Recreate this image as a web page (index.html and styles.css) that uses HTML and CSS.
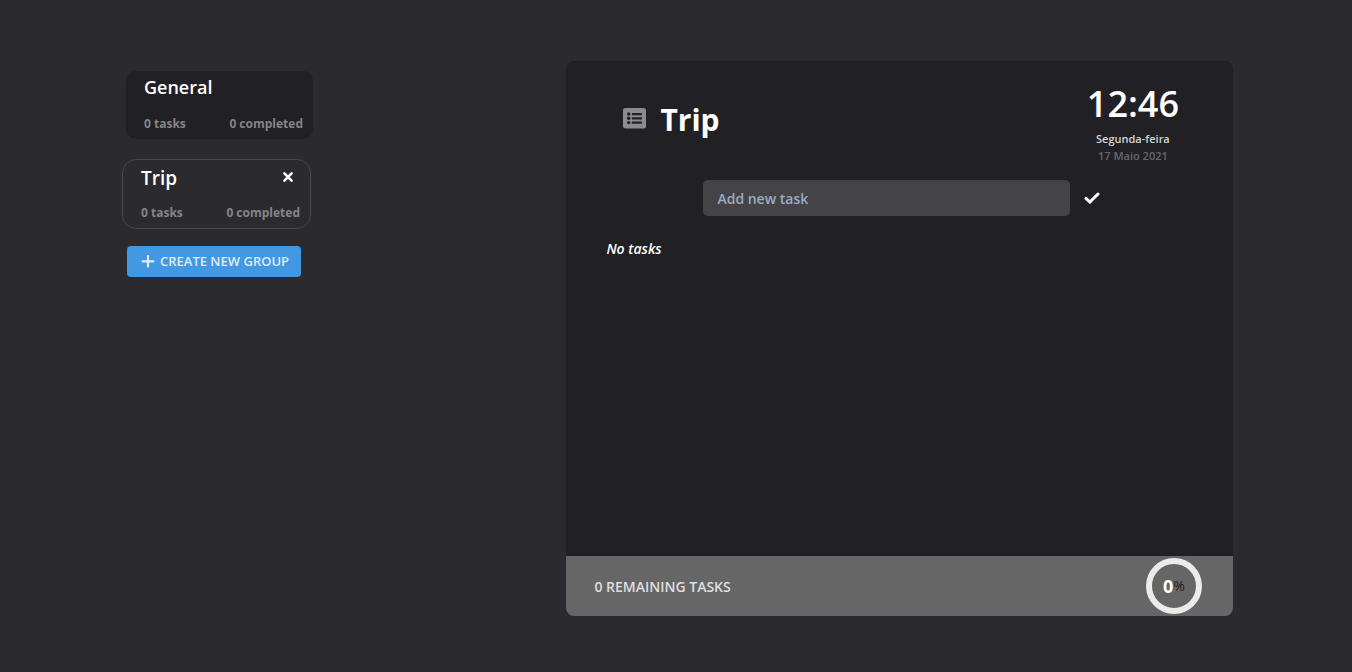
FILE: index.html
```html
<!DOCTYPE html>
<html lang="en">
<head>
<meta charset="utf-8">
<meta name="viewport" content="width=device-width, initial-scale=1">
<title>Tasks</title>
<link rel="stylesheet" href="styles.css">
</head>
<body>
<div class="page">
  <nav class="groups" aria-label="Groups">
    <section class="group">
      <h2 class="group-name">General</h2>
      <div class="group-stats"><span>0 tasks</span><span>0 completed</span></div>
    </section>
    <section class="group group-active">
      <div class="group-head">
        <h2 class="group-name">Trip</h2>
        <button class="icon-button" type="button" aria-label="Delete group">
          <svg width="12" height="14" viewBox="0 0 12 14"><path d="M2.4 2.4l7.2 7.2M9.6 2.4L2.4 9.6" stroke="currentColor" stroke-width="2.6" stroke-linecap="round"/></svg>
        </button>
      </div>
      <div class="group-stats"><span>0 tasks</span><span>0 completed</span></div>
    </section>
    <button class="create" type="button">
      <svg width="14" height="14" viewBox="0 0 14 14"><path d="M7 1v10.600M1.600 6.300h10.800" stroke="currentColor" stroke-width="2.2" stroke-linecap="round"/></svg>
      CREATE NEW GROUP
    </button>
  </nav>
  <main class="panel">
    <header class="panel-head">
      <div class="title">
        <svg width="23" height="22" viewBox="0 0 23 22">
          <rect width="23" height="20.5" rx="2.3" fill="#8c8c8e"/>
          <g fill="#212025">
            <circle cx="5.7" cy="6" r="1.7"/><circle cx="5.7" cy="10.3" r="1.7"/><circle cx="5.7" cy="14.6" r="1.7"/>
            <rect x="8.800" y="4.900" width="10.200" height="2.300" rx=".5"/><rect x="8.800" y="9.200" width="10.200" height="2.300" rx=".5"/><rect x="8.800" y="13.500" width="10.200" height="2.300" rx=".5"/>
          </g>
        </svg>
        <h1 class="title-text">Trip</h1>
      </div>
      <div class="clock">
        <time class="clock-time">12:46</time>
        <span class="clock-day">Segunda-feira</span>
        <span class="clock-date">17 Maio 2021</span>
      </div>
    </header>
    <form class="add">
      <input class="add-input" type="text" placeholder="Add new task" aria-label="Add new task">
      <button class="icon-button" type="button" aria-label="Add task">
        <svg width="16" height="12" viewBox="0 0 16 12"><path d="M2 6.4l3.900 3.600L14 2" fill="none" stroke="currentColor" stroke-width="3" stroke-linecap="round"/></svg>
      </button>
    </form>
    <p class="empty">No tasks</p>
    <footer class="panel-foot">
      <span>0 REMAINING TASKS</span>
      <div class="progress"><strong class="progress-value">0</strong><span class="progress-unit">%</span></div>
    </footer>
  </main>
</div>
</body>
</html>
```
FILE: styles.css
```css
* { box-sizing: border-box; }
body {
  margin: 0;
  background: #2b2a2f;
  color: #fff;
  font-family: "Segoe UI", "Open Sans", "Noto Sans", sans-serif;
  font-size: 14px;
  font-weight: 600;
}
h1, h2, p { margin: 0; }
button { font: inherit; border: 0; cursor: pointer; }
svg { display: block; flex: none; }
.page {
  display: flex;
  justify-content: space-between;
  min-height: 100vh;
  padding: 61px 119px 56px 122px;
}
.groups { width: 191px; padding-top: 10px; }
.group {
  margin: 0 0 20px 4px;
  padding: 2px 10px 5px 18px;
  border-radius: 10px;
  background: #212025;
}
.group-active {
  margin: 0 2px 17px 0;
  padding: 4px 10px 5px 18px;
  border: 1px solid #48474c;
  border-radius: 14px;
  background: none;
}
.group-head { display: flex; align-items: center; justify-content: space-between; padding-right: 6px; }
.group-name { font-size: 18px; font-weight: 600; line-height: 28px; }
.group-stats {
  display: flex;
  justify-content: space-between;
  margin-top: 13px;
  color: #858587;
  font-size: 12px;
  font-weight: 700;
  line-height: 20px;
}
.group-active .group-name { font-size: 19px; }
.group-active .group-stats { margin-top: 11px; }
.icon-button { padding: 0; background: none; color: #fff; }
.create {
  display: flex;
  align-items: center;
  gap: 5px;
  margin-left: 5px;
  padding: 0 12px 0 14px;
  border-radius: 4px;
  background: #4299e1;
  color: #dceefb;
  font-size: 13px;
  line-height: 31px;
  white-space: nowrap;
}
.panel {
  display: flex;
  flex-direction: column;
  flex: 0 0 60%;
  border-radius: 8px;
  background: #212025;
  overflow: hidden;
}
.panel-head { display: flex; justify-content: space-between; padding: 16px 54px 0 57px; }
.title { display: flex; align-items: center; gap: 14px; height: 84px; }
.title-text { font-size: 30px; font-weight: 700; line-height: 40px; padding-top: 2px; }
.clock { display: flex; flex-direction: column; align-items: center; }
.clock-time { font-size: 36px; line-height: 53px; }
.clock-day, .clock-date { font-size: 11px; line-height: 17px; }
.clock-day { color: #d5d5d6; }
.clock-date { color: #69696c; }
.add { display: flex; align-items: center; gap: 14px; margin: 16px 133px 0 137px; }
.add-input {
  flex: 1;
  min-width: 0;
  height: 36px;
  padding: 1px 14px 0;
  border: 0;
  border-radius: 5px;
  background: #444446;
  color: #fff;
  font: inherit;
}
.add-input::placeholder { color: #9cabc8; opacity: 1; }
.empty { padding: 22px 40px; font-style: italic; line-height: 22px; }
.panel-foot {
  display: flex;
  align-items: center;
  justify-content: space-between;
  height: 60px;
  margin-top: auto;
  padding: 0 31px 0 28px;
  background: #666;
  color: #dfdfdf;
}
.progress {
  display: flex;
  align-items: center;
  justify-content: center;
  width: 56px;
  height: 56px;
  border: 6px solid #ebebea;
  border-radius: 50%;
}
.progress-value { color: #fff; font-size: 18px; font-weight: 700; }
.progress-unit { padding-bottom: 2px; color: #212025; font-size: 14px; font-weight: 400; }
```
